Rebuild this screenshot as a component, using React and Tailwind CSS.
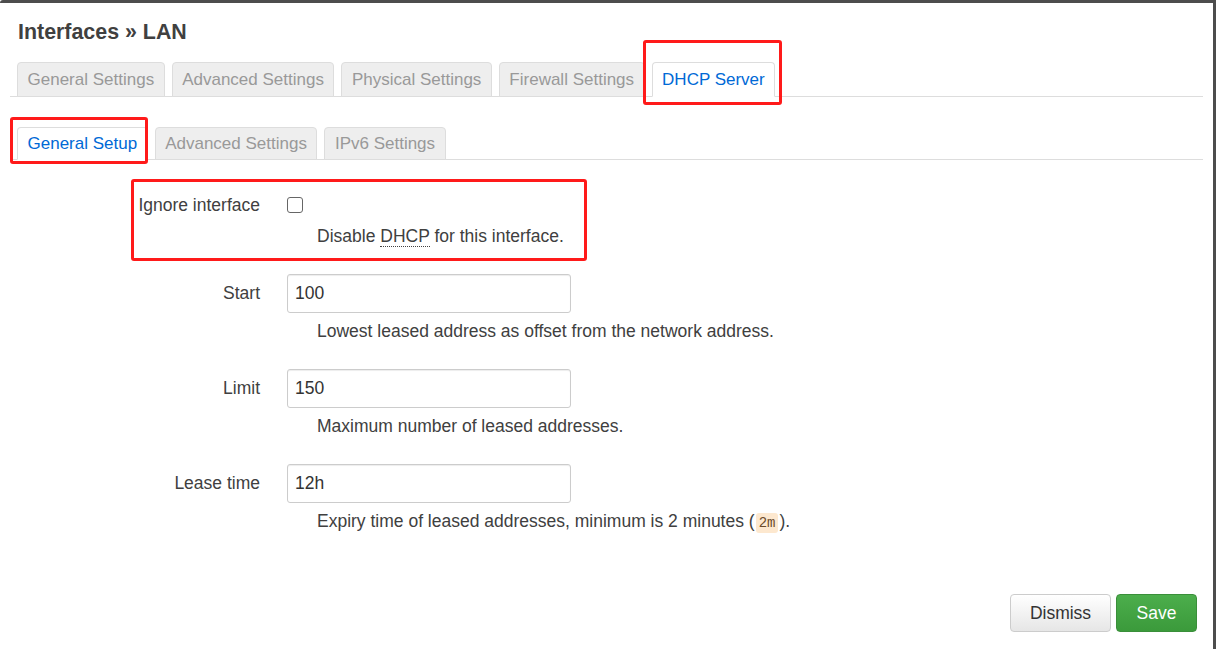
import React from "react";

const topTabs = ["General Settings", "Advanced Settings", "Physical Settings", "Firewall Settings", "DHCP Server"];
const subTabs = ["General Setup", "Advanced Settings", "IPv6 Settings"];

const Tab = ({ label, active, h }) => (
  <li
    className={`${h} -mb-px flex items-center px-[9.5px] rounded-t-[4px] border text-[17px] ${
      active
        ? "bg-white border-[#ddd] border-b-white text-[#0069d6]"
        : "bg-[#eee] border-[#ddd] text-[#999]"
    }`}
  >
    {label}
  </li>
);

const Field = ({ label, value, help }) => (
  <div className="flex flex-col">
    <div className="flex items-center">
      <label className="w-[260px] text-right text-[17.5px] text-[#404040]">{label}</label>
      <input
        readOnly
        value={value}
        className="ml-[27px] w-[284px] h-[39px] px-[7px] border border-[#ccc] rounded-[3px] shadow-[inset_0_1px_1px_rgba(0,0,0,0.075)] text-[17.5px] text-[#333] outline-none"
      />
    </div>
    <div className="ml-[317px] mt-[8px] text-[17.5px] leading-[21px] text-[#404040]">{help}</div>
  </div>
);

export default function App() {
  return (
    <div
      className="relative w-[1216px] h-[649px] overflow-hidden bg-white border-t-[3px] border-r-[3px] border-[#4d4d4d] rounded-tl-[3px]"
      style={{ fontFamily: '"Liberation Sans", Arial, sans-serif' }}
    >
      <h2 className="ml-[18px] mt-[17px] text-[21.4px] leading-[25px] font-bold text-[#404040]">Interfaces » LAN</h2>

      <ul className="ml-[10px] mr-[10px] mt-[17px] pl-[7px] flex gap-[7px] border-b border-[#ddd]">
        {topTabs.map((t) => (
          <Tab key={t} label={t} active={t === "DHCP Server"} h="h-[35px]" />
        ))}
      </ul>

      <ul className="ml-[10px] mr-[10px] mt-[30px] pl-[7px] flex gap-[7px] border-b border-[#ddd]">
        {subTabs.map((t) => (
          <Tab key={t} label={t} active={t === "General Setup"} h="h-[33px]" />
        ))}
      </ul>

      <div className="mt-[28px] flex flex-col">
        <div className="flex items-center h-[34px]">
          <label className="w-[260px] text-right text-[17.5px] text-[#404040]">Ignore interface</label>
          <span className="ml-[27px] w-[16px] h-[16px] rounded-[3px] border border-[#666] bg-white"></span>
        </div>
        <div className="ml-[317px] mt-[4px] text-[17.5px] leading-[21px] text-[#404040]">
          Disable{" "}
          <abbr className="no-underline border-b border-dotted border-[#404040]" title="Dynamic Host Configuration Protocol">
            DHCP
          </abbr>{" "}
          for this interface.
        </div>

        <div className="mt-[27px] flex flex-col gap-[27px]">
          <Field label="Start" value="100" help="Lowest leased address as offset from the network address." />
          <Field label="Limit" value="150" help="Maximum number of leased addresses." />
          <Field
            label="Lease time"
            value="12h"
            help={
              <>
                Expiry time of leased addresses, minimum is 2 minutes (
                <code
                  className="mx-[1px] px-[3px] py-[2px] rounded-[3px] bg-[#fde8cf] text-[#6b4b2a] text-[14px]"
                  style={{ fontFamily: '"Liberation Mono", "Courier New", monospace' }}
                >
                  2m
                </code>
                ).
              </>
            }
          />
        </div>
      </div>

      <div className="absolute right-[16px] bottom-[17px] flex gap-[5px]">
        <button className="w-[101px] h-[38px] rounded-[4px] border border-[#ccc] bg-gradient-to-b from-white to-[#e6e6e6] text-[17.5px] text-[#333]">
          Dismiss
        </button>
        <button className="w-[81px] h-[38px] rounded-[4px] border border-[#3a8f3a] bg-gradient-to-b from-[#4cae4c] to-[#3b9a3b] text-[17.5px] text-white">
          Save
        </button>
      </div>

      {/* annotation boxes */}
      <div className="absolute left-[643px] top-[37px] w-[139px] h-[65px] border-[3px] border-[#ff1a1a] rounded-[3px]"></div>
      <div className="absolute left-[10px] top-[114px] w-[138px] h-[47px] border-[3px] border-[#ff1a1a] rounded-[3px]"></div>
      <div className="absolute left-[131px] top-[176px] w-[456px] h-[82px] border-[3px] border-[#ff1a1a] rounded-[3px]"></div>
    </div>
  );
}
